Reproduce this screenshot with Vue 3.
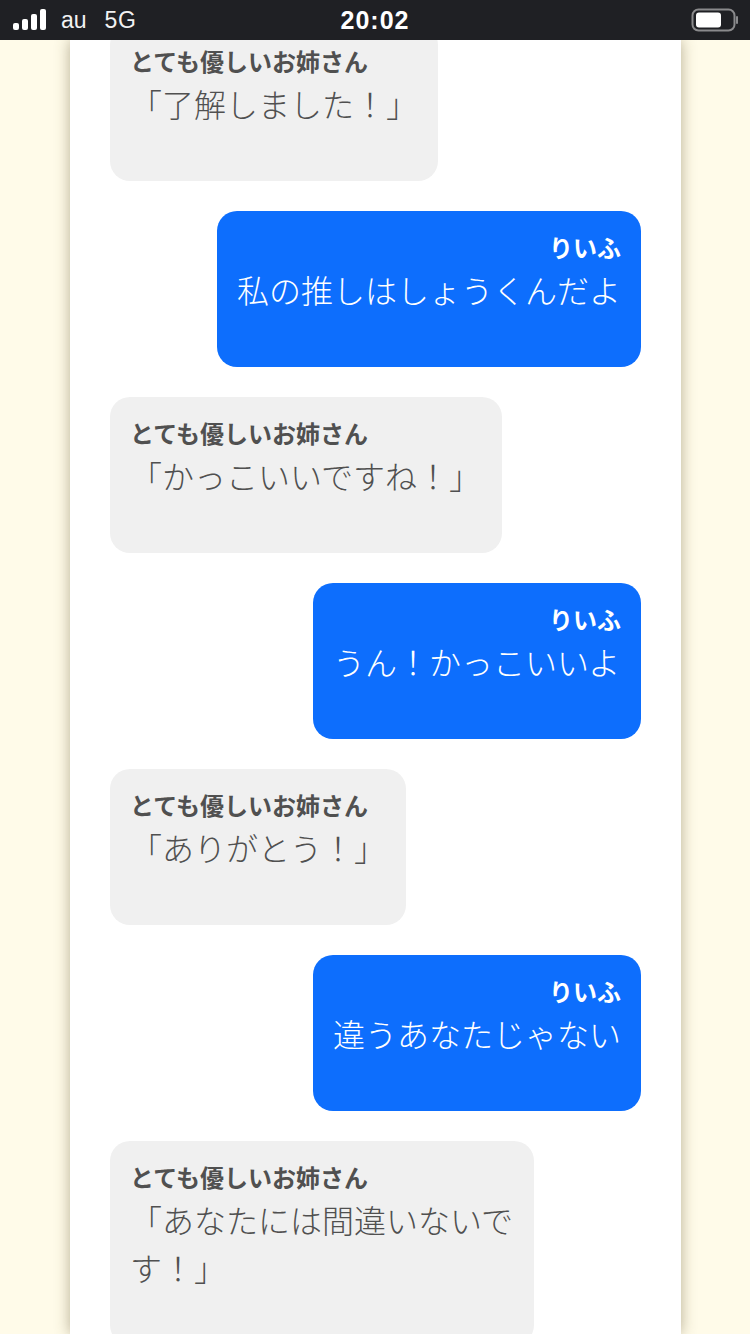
<template>
  <div class="screen">
    <!-- ステータスバー -->
    <div class="status">
      <div class="status-left">
        <svg class="signal" width="34" height="22" viewBox="0 0 34 22">
          <rect x="0" y="14" width="6" height="7" rx="2" />
          <rect x="9" y="10" width="6" height="11" rx="2" />
          <rect x="18" y="5" width="6" height="16" rx="2" />
          <rect x="27" y="0" width="6" height="21" rx="2" />
        </svg>
        <span class="carrier">au</span>
        <span class="network">5G</span>
      </div>
      <div class="clock">20:02</div>
      <div class="status-right">
        <svg width="48" height="24" viewBox="0 0 48 24">
          <rect x="1.5" y="1.5" width="42" height="21" rx="6" fill="none" stroke="#8a8a8c" stroke-width="2" />
          <rect x="5" y="4.5" width="25" height="15" rx="3" fill="#fff" />
          <rect x="45" y="8" width="2" height="8" rx="1" fill="#8a8a8c" />
        </svg>
      </div>
    </div>

    <div class="panel">
      <div class="talk">
        <div
          v-for="(msg, i) in messages"
          :key="i"
          class="bubble"
          :class="msg.me ? 'me' : 'you'"
          :style="{ width: msg.width + 'px' }"
        >
          <div class="name">{{ msg.me ? 'りいふ' : 'とても優しいお姉さん' }}</div>
          <div class="text">{{ msg.text }}</div>
        </div>
      </div>
    </div>
  </div>
</template>

<script setup>
const messages = [
  { me: false, text: '「了解しました！」', width: 328 },
  { me: true, text: '私の推しはしょうくんだよ', width: 424 },
  { me: false, text: '「かっこいいですね！」', width: 392 },
  { me: true, text: 'うん！かっこいいよ', width: 328 },
  { me: false, text: '「ありがとう！」', width: 296 },
  { me: true, text: '違うあなたじゃない', width: 328 },
  { me: false, text: '「あなたには間違いないです！」', width: 424 },
]
</script>

<style>
html,
body {
  margin: 0;
  background: #fffbe9;
}
</style>

<style scoped>
.screen {
  width: 750px;
  height: 1334px;
  overflow: hidden;
  display: flex;
  flex-direction: column;
  background: #fffbe9;
  font-family: "Noto Sans CJK JP", "Noto Sans", sans-serif;
}

.status {
  position: relative;
  z-index: 2;
  flex: none;
  height: 40px;
  background: #1f2024;
  color: #fff;
  display: flex;
  align-items: center;
  justify-content: space-between;
  font-family: "Liberation Sans", sans-serif;
}

.status-left {
  width: 200px;
  display: flex;
  align-items: center;
  padding-left: 13px;
  box-sizing: border-box;
  font-size: 23px;
}

.signal {
  fill: #fff;
}

.carrier {
  margin-left: 14px;
  color: #f2f2f2;
}

.network {
  margin-left: 18px;
  color: #f2f2f2;
  letter-spacing: 0.5px;
}

.clock {
  font-size: 25px;
  font-weight: 700;
  letter-spacing: 1px;
}

.status-right {
  width: 200px;
  display: flex;
  justify-content: flex-end;
  padding-right: 11px;
  box-sizing: border-box;
}

.panel {
  flex: 1;
  width: 611px;
  margin-left: 70px;
  background: #fff;
  box-shadow: 0 0 14px rgba(90, 80, 40, 0.45);
  min-height: 0;
}

.talk {
  margin-top: -15px;
  padding: 0 40px;
  display: flex;
  flex-direction: column;
  gap: 30px;
}

.bubble {
  box-sizing: border-box;
  padding: 18px 20px 54px;
  border-radius: 20px;
}

.you {
  align-self: flex-start;
  background: #f0f0f0;
  color: #505050;
}

.me {
  align-self: flex-end;
  background: #0d6efd;
  color: #fff;
}

.me .name {
  text-align: right;
}

.name {
  font-size: 24px;
  line-height: 36px;
  font-weight: 700;
}

.text {
  font-size: 32px;
  line-height: 48px;
  font-weight: 300;
}
</style>
